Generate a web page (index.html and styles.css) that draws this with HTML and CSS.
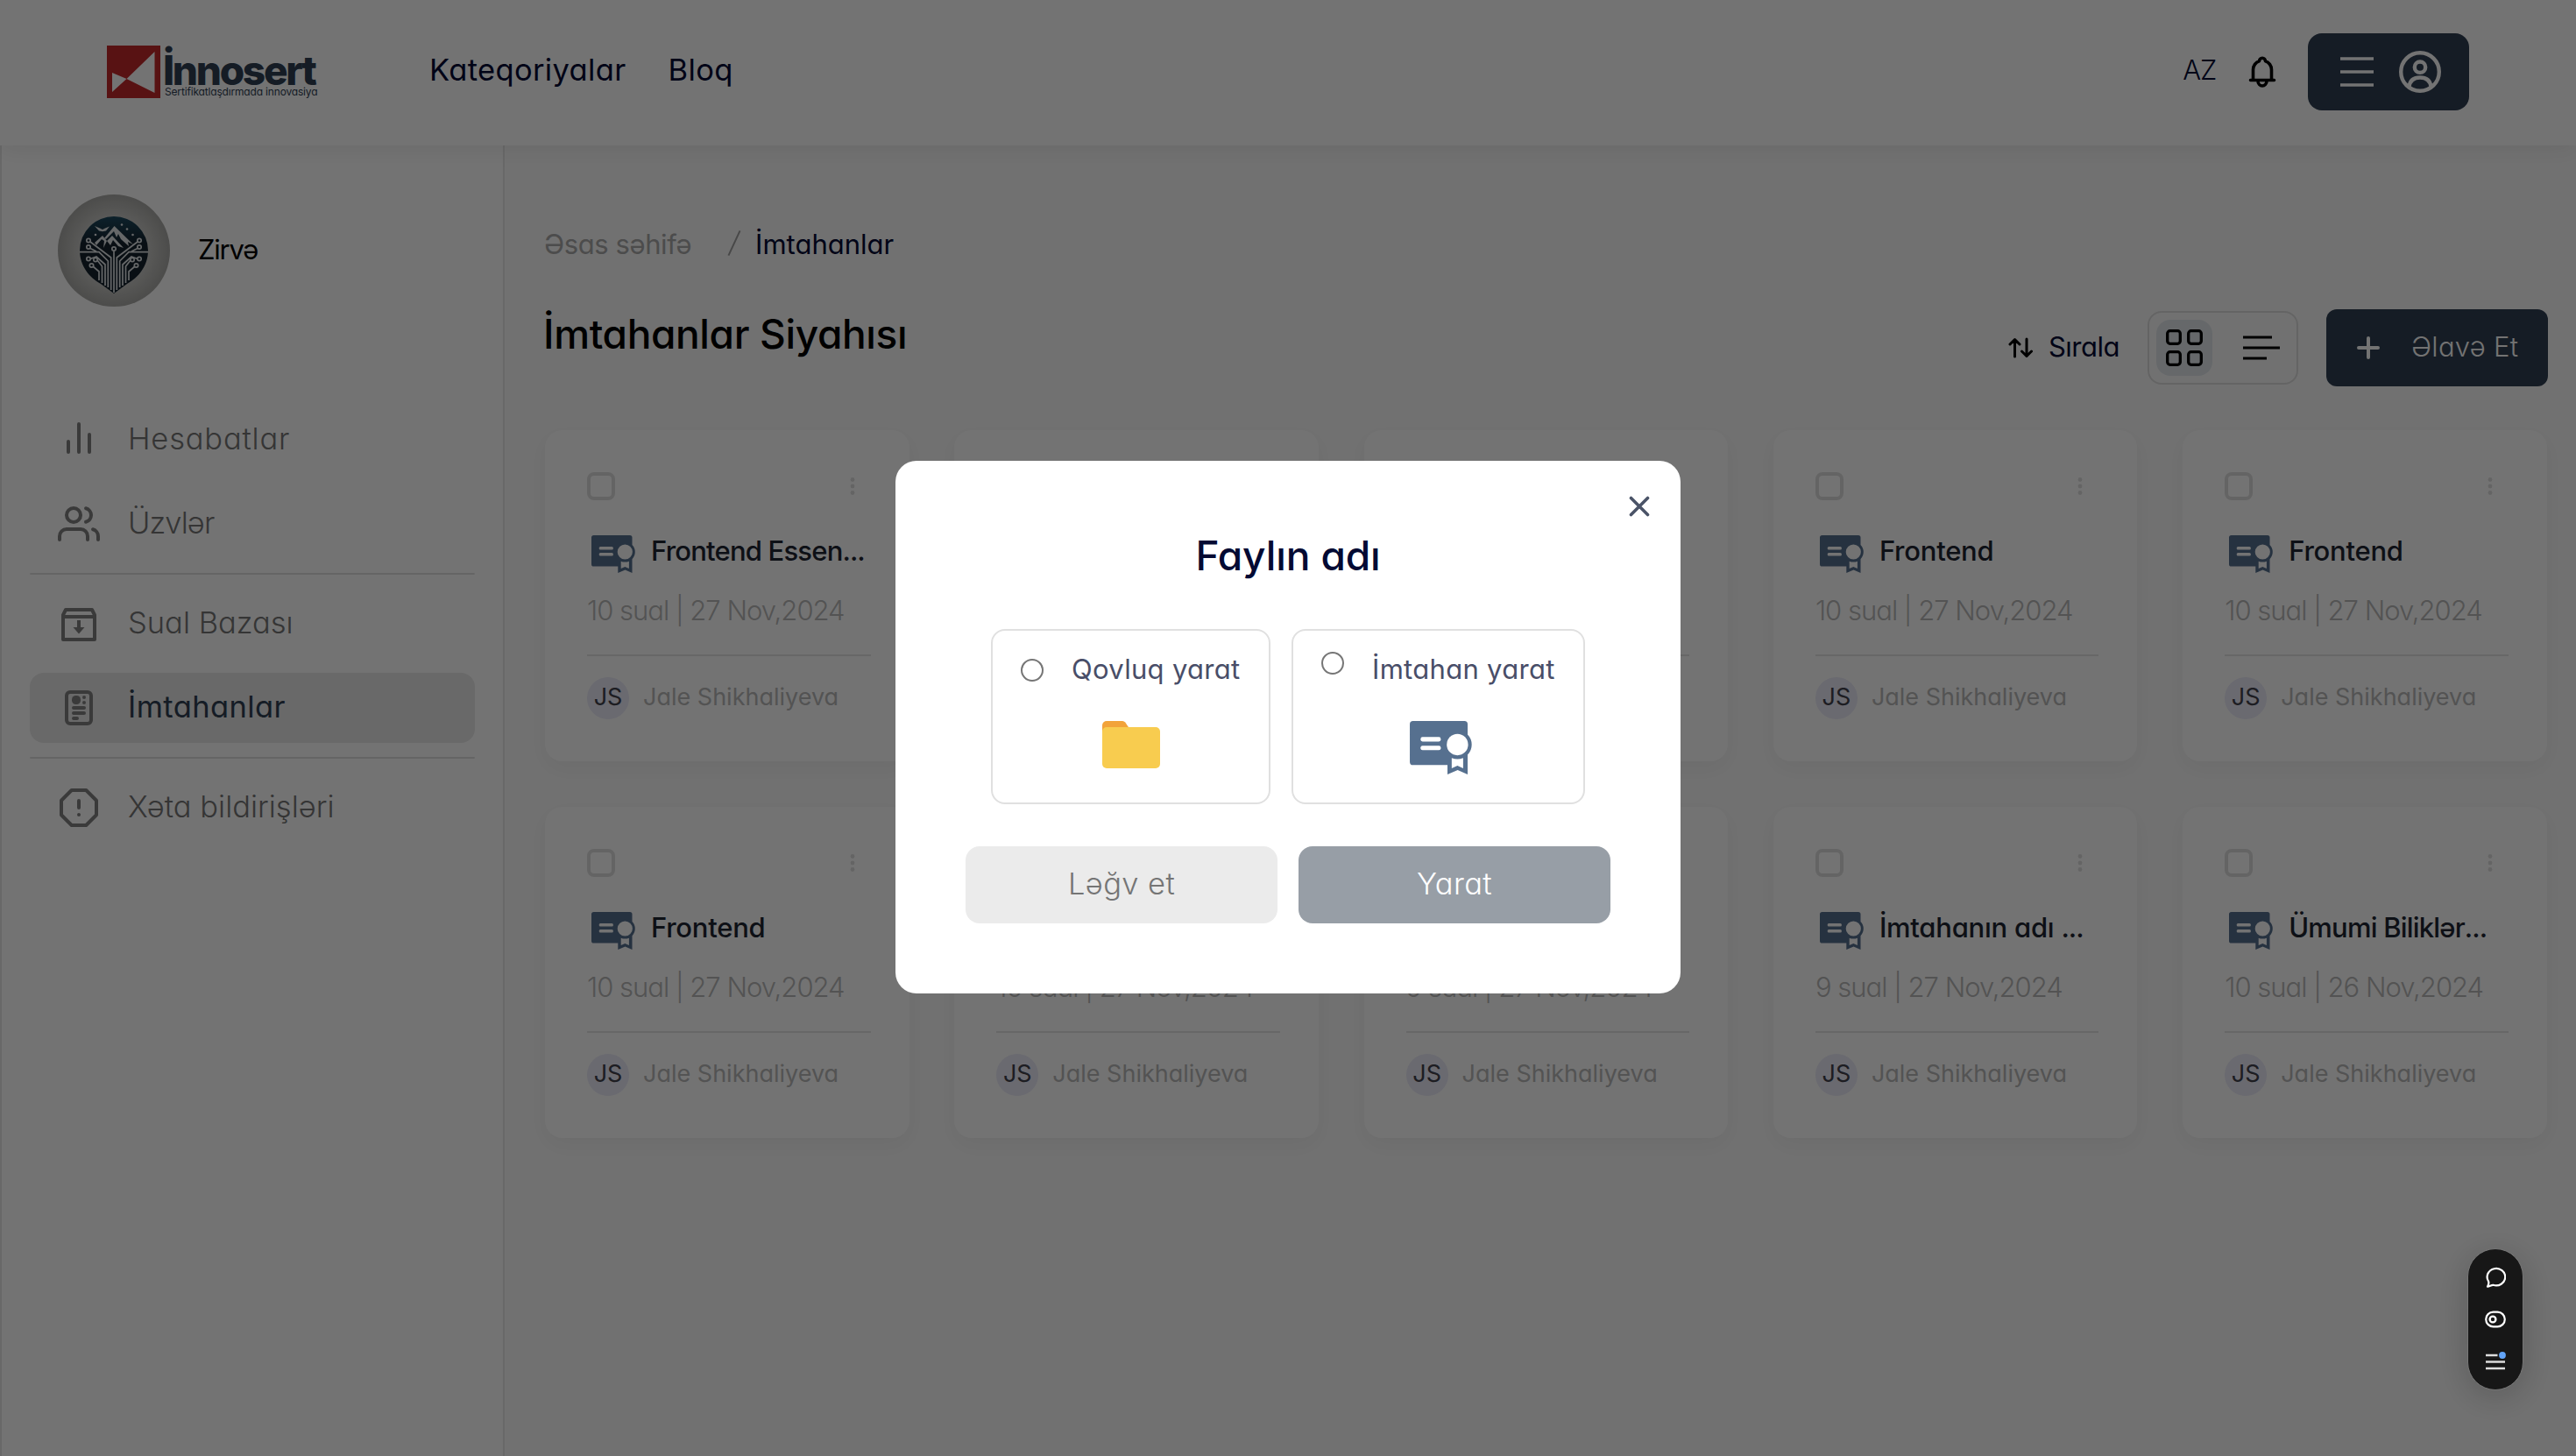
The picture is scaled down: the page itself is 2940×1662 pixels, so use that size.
FILE: index.html
```html
<!DOCTYPE html>
<html lang="az">
<head>
<meta charset="utf-8">
<title>İmtahanlar</title>
<link rel="stylesheet" href="styles.css">
</head>
<body>
<svg class="sprite" width="0" height="0">
  <symbol id="certificate" viewBox="0 0 50 43">
    <path fill="#56708f" d="M2.6 0H43.9a2.6 2.6 0 0 1 2.6 2.6V11a11.6 11.6 0 0 1 0 16.2V43l-8-3.6-8.2 3.6v-7.5H2.6A2.6 2.6 0 0 1 0 32.900V2.600A2.600 2.600 0 0 1 2.600 0z"/>
    <rect x="8.700" y="12.900" width="16.200" height="3.600" rx="1.500" fill="#fff"/>
    <rect x="8.700" y="19.900" width="16.200" height="3.600" rx="1.500" fill="#fff"/>
    <circle cx="38.300" cy="19" r="8.600" fill="#fff"/>
    <path d="M33.700 29.700q4.600 1.800 9.200 0V38l-4.600-2-4.600 2z" fill="#fff"/>
  </symbol>
</svg>

<header class="topbar">
  <div class="logo">
    <svg width="61" height="60" viewBox="0 0 61 60"><rect width="61" height="60" fill="#c4282b"/><path d="M6 31 22.500 38 6 53zM54.500 7V54L22.500 38z" fill="#fff"/></svg>
    <div class="logo-words"><span class="logo-name">İnnosert</span><span class="logo-tag">Sertifikatlaşdırmada innovasiya</span></div>
  </div>
  <nav class="nav"><a>Kateqoriyalar</a><a>Bloq</a></nav>
  <div class="tools">
    <span class="lang">AZ</span>
    <svg class="bell" width="32" height="36" viewBox="0 0 32 36" fill="none" stroke="#000" stroke-width="3.600" stroke-linecap="round" stroke-linejoin="round"><path d="M2.500 27.500h27M5.500 27V15.500c0-4.500 3-8.600 7-9.800 0-1.900 1.500-3.400 3.500-3.400s3.500 1.500 3.500 3.400c4 1.200 7 5.300 7 9.800V27M11 28.500a5 5.500 0 0 0 10 0"/></svg>
    <button class="account">
      <svg width="38" height="34" viewBox="0 0 38 34" stroke="#fff" stroke-width="3.700"><path d="M0 2h38M0 17h38M0 32h38"/></svg>
      <svg width="48" height="48" viewBox="0 0 48 48" fill="none" stroke="#fff" stroke-width="4.400"><circle cx="24" cy="24" r="21.800"/><circle cx="24" cy="18.700" r="6.200"/><path d="M11.500 41c1-7.500 6-10.500 12.500-10.500S35.500 33.500 36.500 41"/></svg>
    </button>
  </div>
</header>

<div class="layout">
<aside class="sidebar">
  <div class="profile">
    <svg width="128" height="128" viewBox="0 0 128 128">
      <defs>
        <radialGradient id="disc"><stop offset="0" stop-color="#dcdcda"/><stop offset=".62" stop-color="#c6c6c3"/><stop offset="1" stop-color="#a9a9a6"/></radialGradient>
        <linearGradient id="night" x2="0" y2="1"><stop offset="0" stop-color="#1d4a60"/><stop offset=".35" stop-color="#14222e"/></linearGradient>
      </defs>
      <circle cx="64" cy="64" r="64" fill="url(#disc)"/>
      <path d="M64 25a39 39 0 0 1 39 39c0 17-11 31-24 38L64 113 49 102C36 95 25 81 25 64A39 39 0 0 1 64 25z" fill="url(#night)"/>
      <g fill="#e2e6e8">
        <path d="M64.500 36 86 57l-6-3 1 5-9-8-3-6-2 4-3-7-9 9-2-1z"/>
        <path d="M51 47l5 6 6-6 13 14-6-2-6-7-3 6-4-5-4 8 1-8-3-2-6 7-2-3z"/>
        <path d="M42 36l6 2.500 3 1.500 3-1.500 5-2-4 5-4 .8-4-.8z"/>
        <circle cx="73" cy="34.500" r="1.300"/><circle cx="79" cy="39.500" r="1.300"/><circle cx="85.500" cy="46" r="1.300"/><circle cx="43" cy="46" r="1.300"/>
      </g>
      <g fill="none" stroke="#e2e6e8" stroke-width="1.700">
        <path d="M64 64.500V112M60.700 109V72L37 54M67.300 109V72L91 54M25 65.700H47L57.300 76V106M103 65.700H81L70.700 76V106M37 61.500 44 65M91 61.500 84 65M37 73.500 44 71 54 80V104M91 73.500 84 71 74 80V104M45 75 50.500 82V101M83 75 77.500 82V101M40 82 47 88V98M88 82 81 88V98"/>
        <circle cx="64" cy="62" r="2.200"/><circle cx="35" cy="52.500" r="2.200"/><circle cx="93" cy="52.500" r="2.200"/><circle cx="35" cy="60" r="2.200"/><circle cx="93" cy="60" r="2.200"/><circle cx="35" cy="73.500" r="2.200"/><circle cx="93" cy="73.500" r="2.200"/><circle cx="43" cy="74.500" r="2.200"/><circle cx="85" cy="74.500" r="2.200"/><circle cx="38.500" cy="81" r="2.200"/><circle cx="89.500" cy="81" r="2.200"/>
      </g>
    </svg>
    <span class="profile-name">Zirvə</span>
  </div>
  <ul class="menu">
    <li><svg width="48" height="48" viewBox="0 0 48 48" fill="none" stroke="#828282" stroke-width="4" stroke-linecap="round"><path d="M12 38V26M24 38V6M36 38V18"/></svg><span class="m1">Hesabatlar</span></li>
    <li><svg width="48" height="48" viewBox="0 0 24 24" fill="none" stroke="#828282" stroke-width="2" stroke-linecap="round" stroke-linejoin="round"><path d="M17 21v-2a4 4 0 0 0-4-4H5a4 4 0 0 0-4 4v2"/><circle cx="9" cy="7" r="4"/><path d="M23 21v-2a4 4 0 0 0-3-3.870M16 3.130a4 4 0 0 1 0 7.750"/></svg><span class="m2">Üzvlər</span></li>
    <li class="rule"></li>
    <li><svg width="48" height="48" viewBox="0 0 48 48" fill="none" stroke="#828282" stroke-width="4" stroke-linejoin="round"><path d="M6 14V42H42V14L39 8H9zM6 16H42"/><path d="M24 20v9" /><path d="M17.500 28h13L24 35.500z" fill="#828282" stroke="none"/></svg><span>Sual Bazası</span></li>
    <li class="active"><svg width="48" height="48" viewBox="0 0 48 48" fill="none" stroke="#828282" stroke-width="4" stroke-linecap="round"><rect x="10" y="6" width="28" height="36" rx="4"/><rect x="16" y="10" width="10" height="10" rx="4.500" fill="#828282" stroke="none"/><circle cx="30" cy="12" r="2" fill="#828282" stroke="none"/><circle cx="30" cy="18" r="2" fill="#828282" stroke="none"/><path d="M18 24h12M18 30h12M18 36h4"/></svg><span class="m4">İmtahanlar</span></li>
    <li class="rule"></li>
    <li><svg width="48" height="48" viewBox="0 0 24 24" fill="none" stroke="#828282" stroke-width="2" stroke-linecap="round" stroke-linejoin="round"><path d="M7.860 2h8.280L22 7.860v8.280L16.140 22H7.860L2 16.140V7.860z"/><path d="M12 8v4M12 16h.01"/></svg><span>Xəta bildirişləri</span></li>
  </ul>
</aside>

<main class="content">
  <div class="crumbs"><span class="crumb-home">Əsas səhifə</span><span class="crumb-sep"></span><span class="crumb-here">İmtahanlar</span></div>
  <div class="heading">
    <h1>İmtahanlar Siyahısı</h1>
    <div class="actions">
      <svg width="28" height="24" viewBox="0 0 28 24" fill="none" stroke="#000" stroke-width="3" stroke-linecap="round" stroke-linejoin="round"><path d="M7.500 22V2.500M2 8l5.500-5.500L13 8M21 2v19.500M15.500 16l5.500 5.500L26.500 16"/></svg>
      <span class="sort">Sırala</span>
      <div class="views">
        <span class="view-on"><svg width="42" height="42" viewBox="0 0 42 42" fill="none" stroke="#000" stroke-width="3.300"><rect x="1.700" y="1.700" width="14.600" height="14.600" rx="3"/><rect x="25.700" y="1.700" width="14.600" height="14.600" rx="3"/><rect x="1.700" y="25.700" width="14.600" height="14.600" rx="3"/><rect x="25.700" y="25.700" width="14.600" height="14.600" rx="3"/></svg></span>
        <svg width="42" height="28" viewBox="0 0 42 28" stroke="#000" stroke-width="3.200"><path d="M0 2h33M0 14h42M0 26h27"/></svg>
      </div>
      <button class="add"><svg width="26" height="26" viewBox="0 0 26 26" stroke="#fff" stroke-width="4" stroke-linecap="round"><path d="M2 13h22M13 2v22"/></svg><span class="add-text">Əlavə Et</span></button>
    </div>
  </div>
  <div class="cards" id="cards"></div>
</main>
</div>

<div class="overlay">
  <section class="modal">
    <svg class="close" width="24" height="24" viewBox="0 0 24 24" stroke="#4a5367" stroke-width="3.600" stroke-linecap="round"><path d="M2.500 2.500l19 19M21.500 2.500l-19 19"/></svg>
    <h2>Faylın adı</h2>
    <div class="options">
      <label class="option">
        <span class="option-row"><span class="radio"></span><span>Qovluq yarat</span></span>
        <svg width="66" height="54" viewBox="0 0 66 54"><path d="M0 5a5 5 0 0 1 5-5h18q2 0 3.200 1.600L32 10v12H0z" fill="#f2a33a"/><rect y="7" width="66" height="47" rx="5" fill="#f8cc4f"/></svg>
      </label>
      <label class="option option-exam">
        <span class="option-row"><span class="radio"></span><span>İmtahan yarat</span></span>
        <svg class="exam-icon" width="71" height="61"><use href="#certificate"/></svg>
      </label>
    </div>
    <div class="buttons"><button class="cancel">Ləğv et</button><button class="create">Yarat</button></div>
  </section>
  <div class="widget">
    <svg width="24" height="24" viewBox="0 0 24 24" fill="none" stroke="#fff" stroke-width="2.200" stroke-linejoin="round"><path d="M3 22.700c1.300-2.300 1.700-4.700 1-6.200A10.300 9.700 0 1 1 9.500 20.800C7.500 20.600 5.500 22.300 3 22.700z"/></svg>
    <svg width="24" height="20" viewBox="0 0 24 20" fill="none" stroke="#fff" stroke-width="2.200"><rect x="1.200" y="1.700" width="21.600" height="16.600" rx="8.300"/><circle cx="9" cy="10" r="3.400" stroke-width="2.400"/></svg>
    <svg width="24" height="24" viewBox="0 0 24 24" stroke="#ddd" stroke-width="2.600"><path d="M1 5h13.500M1 12.500h22M1 20h22"/><circle cx="20" cy="5" r="3.900" fill="#62a4f8" stroke="none"/></svg>
  </div>
</div>
<script src="cards.js"></script>
</body>
</html>
```
FILE: styles.css
```css
* { box-sizing: border-box; }
body { margin: 0; height: 1662px; overflow: hidden; background: #fbfbfb; font-family: Inter, "Noto Sans", sans-serif; font-feature-settings: "cv11"; font-size: 31px; color: #000; }
h1, h2, ul { margin: 0; padding: 0; font-weight: 500; list-style: none; }
button { border: 0; padding: 0; font: inherit; font-feature-settings: inherit; letter-spacing: inherit; }
svg { display: block; flex: none; }
span { white-space: nowrap; }
.sprite { position: absolute; }

.topbar { position: relative; height: 166px; display: flex; align-items: flex-start; padding: 0 122px; background: #fff; box-shadow: 0 4px 24px rgba(0, 0, 0, .08); z-index: 1; }
.logo { display: flex; gap: 3px; width: 242px; margin-top: 52px; color: #2f3e52; }
.logo-words { display: flex; flex-direction: column; }
.logo-name { height: 46px; font-size: 46px; line-height: 56px; font-weight: 800; letter-spacing: -2.300px; }
.logo-tag { padding-left: 2px; font-size: 12px; line-height: 14px; letter-spacing: -.170px; }
.nav { display: flex; gap: 48px; margin: 60px 0 0 126px; font-size: 34.500px; line-height: 40px; font-weight: 400; letter-spacing: .350px; color: #030a33; }
.tools { margin-left: auto; display: flex; align-items: flex-start; }
.lang { margin-top: 60px; line-height: 40px; font-weight: 300; letter-spacing: -1.200px; color: #030a33; }
.bell { margin: 64px 36px 0 37px; }
.account { width: 184px; height: 88px; margin-top: 38px; border-radius: 16px; background: #2f3e52; display: flex; align-items: center; justify-content: center; gap: 29px; padding-left: 4px; }

.layout { display: flex; height: 1496px; }
.sidebar { width: 576px; background: #fff; border: solid #e6e6e6; border-width: 0 2px; padding: 56px 32px 0 32px; flex: none; }
.profile { display: flex; align-items: center; gap: 32px; padding-left: 32px; }
.profile-name { font-weight: 400; letter-spacing: -1.200px; padding-bottom: 3px; }
.menu { display: flex; flex-direction: column; gap: 16px; margin-top: 112px; font-size: 34.500px; font-weight: 300; color: #767676; }
.menu li { height: 80px; display: flex; align-items: center; gap: 32px; padding-left: 32px; border-radius: 16px; }
.menu span { padding-bottom: 3px; }
.menu .m1 { letter-spacing: .800px; }
.menu .m2 { letter-spacing: -.900px; }
.menu .m4 { letter-spacing: .400px; }
.menu .rule { height: 2px; background: #e0e0e0; }
.menu .active { background: #e9e9e9; color: #2f3e52; font-weight: 400; }

.content { flex: 1; padding: 93px 32px 0 46px; }
.crumbs { display: flex; margin-left: -1px; line-height: 40px; color: #a8a8a8; }
.crumb-home { letter-spacing: -.400px; }
.crumb-here { color: #030a33; }
.crumb-sep { width: 2px; height: 31px; margin: 3px 23px 0 48px; background: #a0a0a0; transform: rotate(25deg); }
.heading { display: flex; justify-content: space-between; margin-top: 54px; height: 88px; }
h1 { margin-left: -2px; font-size: 46px; line-height: 56px; letter-spacing: -.350px; }
.actions { display: flex; align-items: center; }
.sort { margin: 0 32px 0 18px; padding-bottom: 3px; color: #030a33; letter-spacing: -.500px; }
.views { display: flex; align-items: center; width: 172px; height: 84px; margin-right: 32px; padding-left: 8px; gap: 35px; border: 2px solid #dedede; border-radius: 16px; }
.view-on { width: 64px; height: 64px; border-radius: 16px; background: #e2e7ec; display: flex; align-items: center; justify-content: center; }
.add { width: 253px; height: 88px; border-radius: 12px; background: #2f3e52; color: #fff; display: flex; align-items: center; padding-left: 35px; gap: 36px; font-weight: 300; }
.add-text { padding-bottom: 3px; letter-spacing: .300px; }

.cards { display: grid; grid-template-columns: repeat(5, 415.500px); gap: 52px 51.800px; margin-top: 50px; }
.card { height: 378px; border-radius: 20px; background: #fff; padding: 48px 44px 0 48px; box-shadow: 0 8px 24px rgba(0, 0, 0, .05); }
.card-top { display: flex; justify-content: space-between; align-items: center; }
.check { width: 32px; height: 32px; border: 4px solid #dedede; border-radius: 8px; }
.dots { margin-right: 18px; }
.card-name { display: flex; height: 48px; margin-top: 34px; line-height: 48px; font-weight: 500; letter-spacing: -.250px; color: #1d2531; }
.card-name svg { margin: 6px 18px 0 5px; }
.card-name .cut { letter-spacing: -1px; }
.name-tight { letter-spacing: -.800px; }
.card-date { height: 48px; margin-top: 20px; line-height: 48px; font-weight: 300; letter-spacing: -1px; color: #b8b8b8; }
.card-by { display: flex; gap: 16px; margin-top: 26px; padding-top: 24px; border-top: 2px solid #e4e4e4; font-size: 27px; line-height: 45px; color: #b8b8b8; }
.initials { width: 48px; height: 48px; border-radius: 50%; background: #ebebf8; text-align: center; color: #40404c; }

.overlay { position: fixed; inset: 0; z-index: 2; background: rgba(0, 0, 0, .55); display: flex; align-items: center; justify-content: center; padding-bottom: 2px; }
.modal { position: relative; width: 896px; height: 608px; border-radius: 24px; background: #fff; padding: 82px 80px 0; }
.close { position: absolute; right: 35px; top: 40px; }
h2 { font-size: 46px; line-height: 53px; text-align: center; color: #030a33; letter-spacing: -.100px; }
.options { display: flex; justify-content: center; gap: 24px; margin-top: 57px; }
.option { width: 319px; height: 200px; border: 2px solid #e0e0e0; border-radius: 16px; display: flex; flex-direction: column; align-items: center; gap: 31px; padding-top: 22px; color: #494e68; font-weight: 400; letter-spacing: .300px; }
.option-exam { width: 335px; }
.option-row { display: flex; align-items: flex-start; gap: 32px; line-height: 44px; height: 50px; width: 100%; padding-left: 32px; }
.radio { width: 26px; height: 26px; border: 2px solid #767676; border-radius: 50%; margin-top: 10px; flex: none; }
.option-exam .radio { margin-top: 2px; }
.exam-icon { margin-left: 5px; }
.buttons { display: flex; gap: 24px; margin-top: 48px; font-size: 34.500px; font-weight: 300; letter-spacing: .400px; }
.buttons button { width: 356px; height: 88px; border-radius: 16px; padding-bottom: 4px; }
.cancel { background: #ebebeb; color: #757575; }
.create { background: #979ea6; color: #fff; }
.widget { position: absolute; right: 60px; top: 1425px; width: 64px; height: 162px; border-radius: 32px; border: 1px solid #777; background: #171717; box-shadow: 0 8px 40px rgba(0, 0, 0, .2); display: flex; flex-direction: column; align-items: center; justify-content: space-between; padding: 20px 0 20px; }
```
FILE: cards.js
```js
const exams = [
  ["Frontend Essen...", "10 sual | 27 Nov,2024"], ["Frontend", "10 sual | 27 Nov,2024"], ["Frontend", "10 sual | 27 Nov,2024"], ["Frontend", "10 sual | 27 Nov,2024"], ["Frontend", "10 sual | 27 Nov,2024"],
  ["Frontend", "10 sual | 27 Nov,2024"], ["Frontend", "10 sual | 27 Nov,2024"], ["Frontend", "9 sual | 27 Nov,2024"], ["İmtahanın adı ...", "9 sual | 27 Nov,2024"], ["Ümumi Biliklər...", "10 sual | 26 Nov,2024"]
];
document.getElementById("cards").innerHTML = exams.map(([name, date]) => `
<article class="card">
  <div class="card-top"><span class="check"></span><svg class="dots" width="6" height="20" viewBox="0 0 6 20" fill="#dedede"><circle cx="3" cy="2.500" r="2.400"/><circle cx="3" cy="10" r="2.400"/><circle cx="3" cy="17.500" r="2.400"/></svg></div>
  <div class="card-name"><svg width="50" height="43"><use href="#certificate"/></svg><span class="${/Essen|Bilik/.test(name) ? "name-tight" : ""}">${name.replace("...", '<span class="cut">...</span>')}</span></div>
  <div class="card-date">${date}</div>
  <div class="card-by"><span class="initials">JS</span><span>Jale Shikhaliyeva</span></div>
</article>`).join("");
```
